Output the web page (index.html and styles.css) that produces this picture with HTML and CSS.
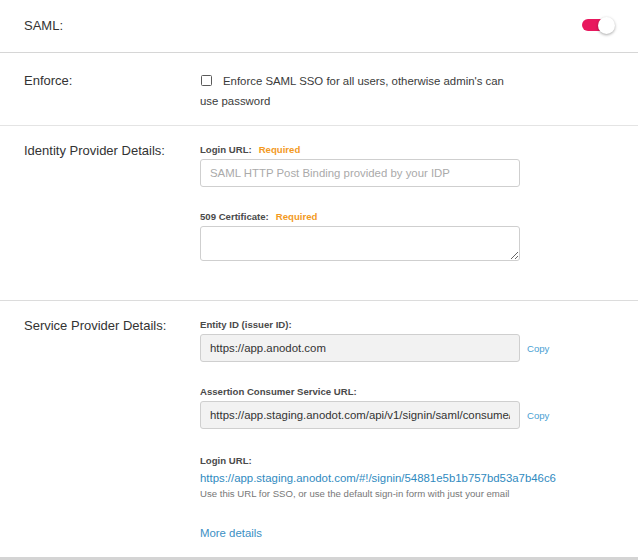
FILE: index.html
```html
<!DOCTYPE html>
<html>
<head>
<meta charset="utf-8">
<link rel="stylesheet" href="styles.css">
</head>
<body>
<div class="page">
  <div class="row row-saml">
    <div class="row-label">SAML:</div>
    <div class="toggle"><span class="toggle-track"></span><span class="toggle-knob"></span></div>
  </div>

  <div class="row row-enforce">
    <div class="row-label lh20">Enforce:</div>
    <div class="row-body enforce-text"><span class="checkbox"></span>Enforce SAML SSO for all users, otherwise admin's can use password</div>
  </div>

  <div class="row row-idp">
    <div class="row-label lh16">Identity Provider Details:</div>
    <div class="row-body">
      <div class="field">
        <div class="field-label">Login URL:<span class="required">Required</span></div>
        <input class="text-input" type="text" placeholder="SAML HTTP Post Binding provided by your IDP">
      </div>
      <div class="field">
        <div class="field-label">509 Certificate:<span class="required">Required</span></div>
        <textarea class="text-area"></textarea>
      </div>
    </div>
  </div>

  <div class="row row-sp">
    <div class="row-label lh16">Service Provider Details:</div>
    <div class="row-body">
      <div class="field">
        <div class="field-label">Entity ID (issuer ID):</div>
        <div class="copy-line">
          <input class="text-input readonly" type="text" readonly value="https://app.anodot.com">
          <a class="copy">Copy</a>
        </div>
      </div>
      <div class="field">
        <div class="field-label">Assertion Consumer Service URL:</div>
        <div class="copy-line">
          <input class="text-input readonly" type="text" readonly value="https://app.staging.anodot.com/api/v1/signin/saml/consume/54881e5b1b757bd53a7b46c6">
          <a class="copy">Copy</a>
        </div>
      </div>
      <div class="field login-field">
        <div class="field-label">Login URL:</div>
        <a class="login-link">https://app.staging.anodot.com/#!/signin/54881e5b1b757bd53a7b46c6</a>
        <div class="helper">Use this URL for SSO, or use the default sign-in form with just your email</div>
      </div>
      <a class="more">More details</a>
    </div>
  </div>
</div>
</body>
</html>
```

FILE: styles.css
```css
* { box-sizing: border-box; }
html, body { margin: 0; padding: 0; background: #fff; }
body { font-family: "Liberation Sans", Arial, sans-serif; color: #333; }
.page { width: 638px; }

.row { display: flex; padding: 0 23px 0 24px; }
.row-label { width: 176px; flex: none; font-size: 13px; color: #333; }
.row-body { width: 320px; flex: none; }
.lh20 { line-height: 20px; }
.lh16 { line-height: 16px; }

.row-saml { height: 53px; align-items: center; border-bottom: 1px solid #d6d6d6; padding-bottom: 2px; }
.toggle { position: relative; margin-left: auto; width: 33px; height: 17px; }
.toggle-track { position: absolute; left: 0; top: 2px; width: 28px; height: 12px; border-radius: 6px; background: #e8185e; }
.toggle-knob { position: absolute; right: 0; top: 0; width: 17px; height: 17px; border-radius: 50%; background: #fff; box-shadow: 0 1px 3px rgba(0,0,0,0.35); }

.row-enforce { padding-top: 18px; padding-bottom: 14px; border-bottom: 1px solid #e4e4e4; }
.enforce-text { font-size: 11.4px; line-height: 20px; color: #3a3a3a; }
.checkbox { display: inline-block; width: 11px; height: 11px; border: 1.5px solid #5a5a5a; border-radius: 1.5px; margin: 0 11px 0 1px; vertical-align: -1px; }

.row-idp { padding-top: 17px; padding-bottom: 39px; border-bottom: 1px solid #dcdcdc; }
.row-sp { padding-top: 17px; padding-bottom: 16px; border-bottom: 3px solid #d4d4d4; }

.field + .field { margin-top: 23px; }
.field-label { font-size: 9.6px; font-weight: bold; line-height: 14px; color: #4a4a4a; margin-bottom: 2px; }
.required { color: #f39a1e; margin-left: 7px; }

.text-input { display: block; width: 320px; height: 28px; border: 1px solid #cfcfcf; border-radius: 3px; padding: 0 9px; font-family: "Liberation Sans", Arial, sans-serif; font-size: 11.4px; color: #333; background: #fff; outline: none; margin: 0; }
.text-input::placeholder { color: #aaa; }
.readonly { background: #f2f2f2; flex: none; }
.text-area { display: block; width: 320px; height: 35px; border: 1px solid #cfcfcf; border-radius: 3px; margin: 0; padding: 4px 9px; font-family: "Liberation Sans", Arial, sans-serif; font-size: 11.4px; resize: vertical; }

.copy-line { display: flex; align-items: center; width: 360px; }
.copy { font-size: 9.6px; color: #4a9fd3; margin-left: 7px; }

.login-field { margin-top: 25px !important; }
.login-link { display: block; font-size: 11.4px; line-height: 17px; color: #2f8ac0; white-space: nowrap; }
.helper { font-size: 9.6px; line-height: 14px; color: #777; white-space: nowrap; }
.more { display: block; margin-top: 24px; font-size: 11.4px; line-height: 16px; color: #3b8fc4; }
```
